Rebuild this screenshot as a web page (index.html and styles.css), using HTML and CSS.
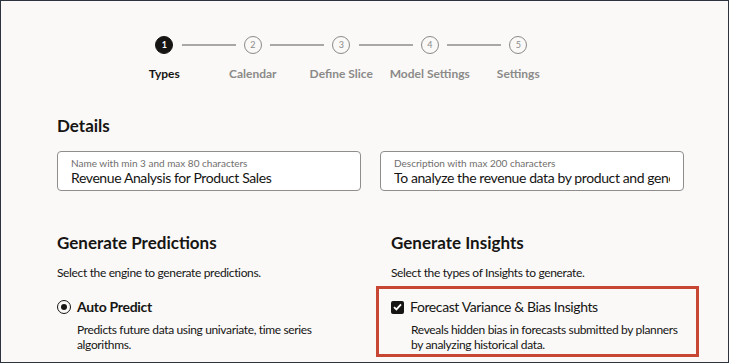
FILE: index.html
```html
<!DOCTYPE html>
<html lang="en">
<head>
  <meta charset="UTF-8" />
  <meta name="viewport" content="width=device-width, initial-scale=1.0" />
  <title>Create Insights - Types</title>
  <link rel="stylesheet" href="styles.css">
</head>
<body>
  <div class="page">
    <div class="stepper">
      <div class="step active">
        <div class="step-num">1</div>
        <div class="step-label">Types</div>
      </div>
      <div class="step">
        <div class="step-num">2</div>
        <div class="step-label">Calendar</div>
      </div>
      <div class="step">
        <div class="step-num">3</div>
        <div class="step-label">Define Slice</div>
      </div>
      <div class="step">
        <div class="step-num">4</div>
        <div class="step-label">Model Settings</div>
      </div>
      <div class="step">
        <div class="step-num">5</div>
        <div class="step-label">Settings</div>
      </div>
    </div>

    <h2 class="section-title">Details</h2>
    <div class="fields">
      <div class="field">
        <div class="field-label">Name with min 3 and max 80 characters</div>
        <div class="field-value">Revenue Analysis for Product Sales</div>
      </div>
      <div class="field">
        <div class="field-label">Description with max 200 characters</div>
        <div class="field-value">To analyze the revenue data by product and generate insights</div>
      </div>
    </div>

    <div class="columns">
      <div class="column">
        <h2 class="section-title big">Generate Predictions</h2>
        <p class="hint">Select the engine to generate predictions.</p>
        <div class="option">
          <div class="option-row">
            <span class="radio checked"></span>
            <span class="option-name bold">Auto Predict</span>
          </div>
          <p class="option-desc">Predicts future data using univariate, time series algorithms.</p>
        </div>
      </div>
      <div class="column">
        <h2 class="section-title big">Generate Insights</h2>
        <p class="hint">Select the types of Insights to generate.</p>
        <div class="option highlight">
          <div class="option-row">
            <span class="checkbox">
              <svg width="9" height="8" viewBox="0 0 9 8"><path d="M1 4.2 L3.4 6.4 L8 1.4" fill="none" stroke="#fff" stroke-width="1.8"/></svg>
            </span>
            <span class="option-name">Forecast Variance &amp; Bias Insights</span>
          </div>
          <p class="option-desc">Reveals hidden bias in forecasts submitted by planners by analyzing historical data.</p>
        </div>
      </div>
    </div>
  </div>
</body>
</html>
```

FILE: styles.css
```css
html, body {
  margin: 0;
  padding: 0;
}
body {
  background-color: #faf9f8;
  color: #161513;
  font-family: 'Lato', 'Noto Sans', sans-serif;
}
.page {
  box-sizing: border-box;
  width: 729px;
  height: 363px;
  border: 1px solid #2e3340;
  padding: 35px 0 0 56px;
  overflow: hidden;
}

/* stepper */
.stepper {
  display: grid;
  grid-template-columns: repeat(5, 88.5px);
  margin-left: 63px;
}
.step {
  position: relative;
  display: flex;
  flex-direction: column;
  align-items: center;
}
.step + .step::before {
  content: "";
  position: absolute;
  top: 8px;
  left: -27px;
  width: 54px;
  height: 2px;
  background-color: #a9a8a6;
}
.step-num {
  box-sizing: border-box;
  width: 18px;
  height: 18px;
  border-radius: 50%;
  border: 1px solid #8b8a88;
  color: #8b8a88;
  font-size: 9px;
  line-height: 16px;
  text-align: center;
}
.step-label {
  margin-top: 12px;
  font-size: 12px;
  line-height: 16px;
  font-weight: 700;
  color: #8b8a88;
  white-space: nowrap;
}
.step.active .step-num {
  background-color: #161513;
  border-color: #161513;
  color: #fff;
  font-weight: 700;
}
.step.active .step-label {
  color: #161513;
}

/* details */
.section-title {
  margin: 33px 0 0;
  font-size: 17px;
  line-height: 22px;
  font-weight: 700;
}
.fields {
  display: grid;
  grid-template-columns: 304px 304px;
  gap: 19px;
  margin-top: 14px;
}
.field {
  box-sizing: border-box;
  height: 40px;
  padding: 5px 13px 0;
  border: 1px solid #8f8e8c;
  border-radius: 4px;
  background-color: #fff;
}
.field-label {
  font-size: 10px;
  line-height: 12px;
  color: #6f6e6c;
}
.field-value {
  font-size: 14px;
  line-height: 17px;
  letter-spacing: -0.4px;
  white-space: nowrap;
  overflow: hidden;
}

/* predictions / insights */
.columns {
  display: grid;
  grid-template-columns: 334px 1fr;
  margin-top: 41px;
}
.section-title.big {
  margin: 0;
}
.hint {
  margin: 11px 0 0;
  font-size: 12px;
  line-height: 16px;
  letter-spacing: -0.35px;
}
.option {
  box-sizing: border-box;
  width: 323px;
  margin: 5px 0 0 -15px;
  padding: 9px 12px 2px;
  border: 3px solid transparent;
}
.option.highlight {
  border-color: #c74634;
}
.option-row {
  display: flex;
  align-items: center;
  gap: 6px;
  height: 18px;
}
.option-name {
  font-size: 14px;
  line-height: 18px;
  letter-spacing: -0.4px;
}
.option-name.bold {
  font-weight: 700;
  letter-spacing: -0.3px;
}
.radio {
  box-sizing: border-box;
  width: 14px;
  height: 14px;
  border: 1.5px solid #161513;
  border-radius: 50%;
  position: relative;
}
.radio.checked::after {
  content: "";
  position: absolute;
  top: 2.5px;
  left: 2.5px;
  width: 6px;
  height: 6px;
  border-radius: 50%;
  background-color: #161513;
}
.checkbox {
  width: 13px;
  height: 13px;
  border-radius: 2px;
  background-color: #161513;
  display: flex;
  align-items: center;
  justify-content: center;
}
.option-desc {
  margin: 6px 0 0;
  padding-left: 20px;
  font-size: 12px;
  line-height: 15px;
  letter-spacing: -0.35px;
}
```
